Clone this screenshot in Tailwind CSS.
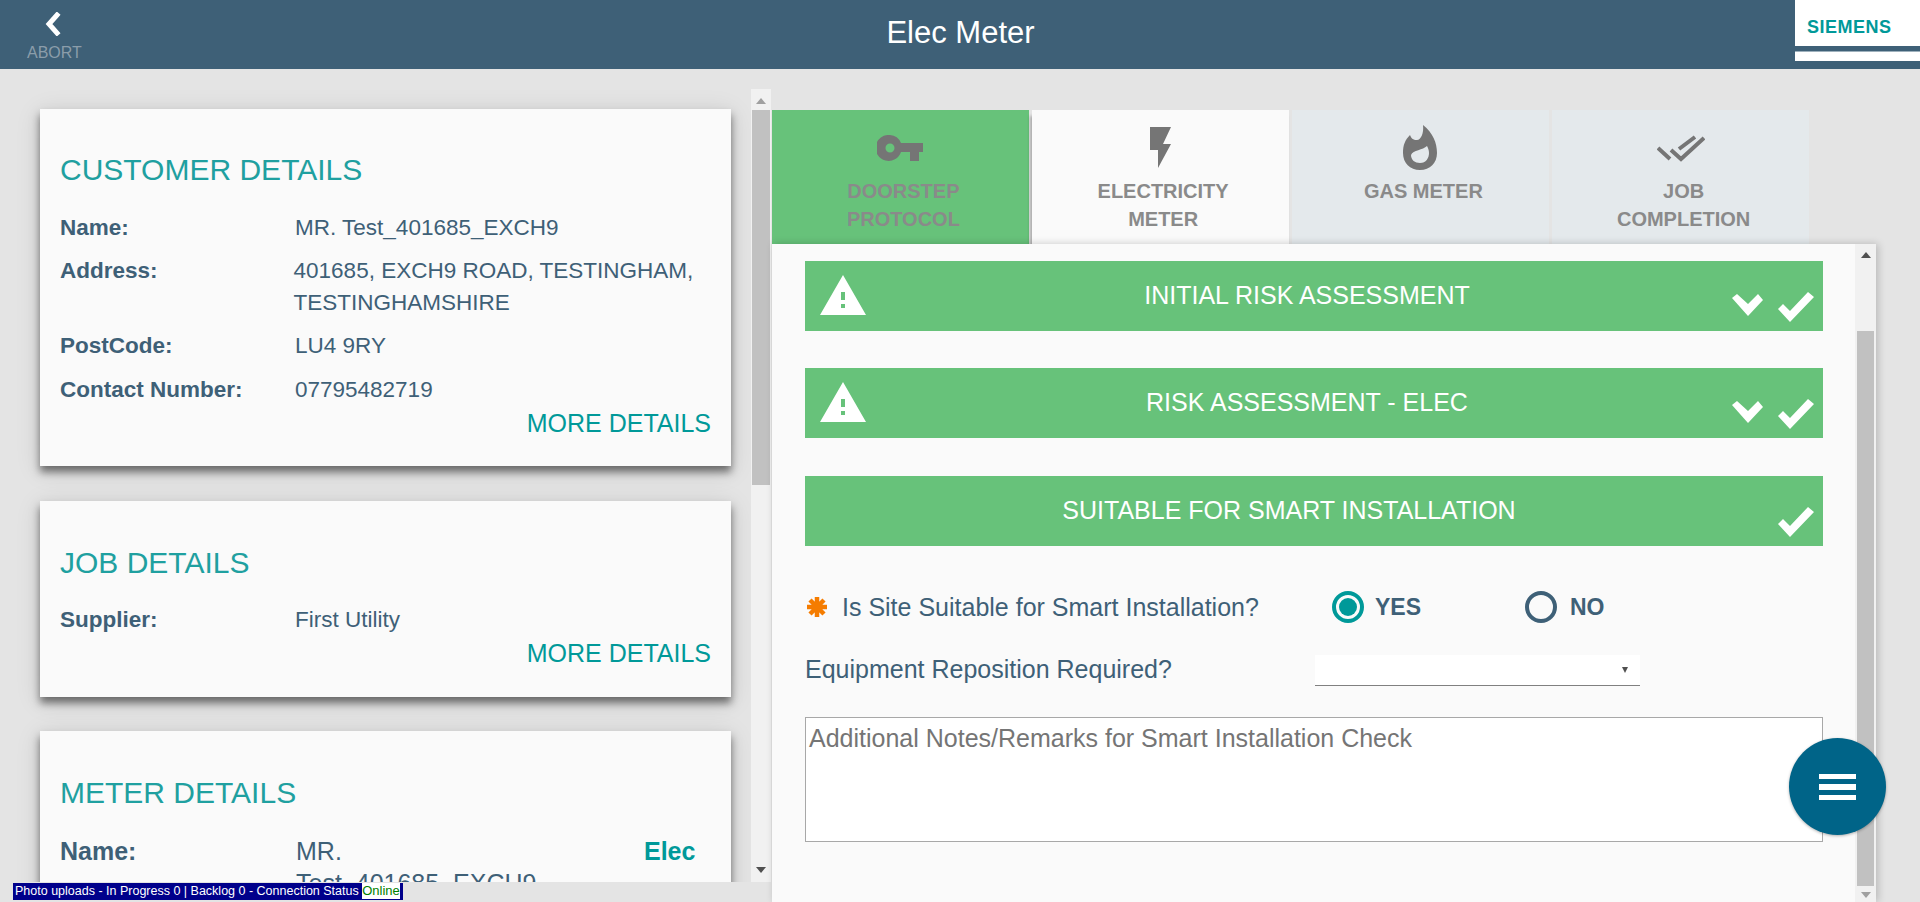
<!DOCTYPE html>
<html lang="en">

<head>
    <meta charset="UTF-8">
    <title>Elec Meter</title>
    <script src="https://cdn.jsdelivr.net/npm/@tailwindcss/browser@4"></script>
</head>

<body class="h-[902px] overflow-hidden bg-[#e4e4e4] font-['Liberation_Sans',Arial,sans-serif] text-[#3e6077]">
    <header class="h-[69px] bg-[#3e6077] flex items-start relative">
        <div class="w-[110px] pl-[27px] pt-[12px] flex flex-col">
            <svg width="18" height="24" viewBox="0 0 18 24" class="ml-[17px]">
                <path d="M13 3L5 12L13 21" fill="none" stroke="#fff" stroke-width="5" stroke-linecap="square" />
            </svg>
            <span class="text-[16px] leading-[18px] mt-[8px] text-[#8b9daa]">ABORT</span>
        </div>
        <h1 class="flex-1 text-center text-[31px] leading-[66px] text-white mr-[109px]">Elec Meter</h1>
        <div class="absolute right-0 top-0 w-[125px]">
            <div class="h-[46px] bg-white pl-[12px] pt-[18px]">
                <span class="block text-[#009999] font-bold text-[18px] leading-[18px] tracking-[0.5px]">SIEMENS</span>
            </div>
            <div class="h-[6px] border-b border-[#9db0bc]"></div>
            <div class="h-[9px] bg-white"></div>
        </div>
    </header>

    <main class="flex h-[833px] relative">
        <!-- left column -->
        <section class="w-[772px] h-[813px] flex shrink-0">
            <div class="w-[751px] h-full overflow-hidden pt-[40px] pl-[40px] pr-[20px]">
                <div class="bg-[#fafafa] h-[357px] pl-[20px] pr-[20px] pt-[43px] shadow-[0_6px_8px_rgba(0,0,0,0.5),0_4px_24px_rgba(0,0,0,0.12)]">
                    <h2 class="text-[30px] leading-[36px] text-[#1fa0a0]">CUSTOMER DETAILS</h2>
                    <dl class="mt-[24px] text-[22.5px] leading-[32px]">
                        <div class="flex h-[32px]"><dt class="w-[235px] font-bold">Name:</dt><dd>MR. Test_401685_EXCH9</dd></div>
                        <div class="flex mt-[11px]"><dt class="w-[235px] font-bold">Address:</dt><dd class="w-[420px]">401685, EXCH9 ROAD, TESTINGHAM, TESTINGHAMSHIRE</dd></div>
                        <div class="flex mt-[11px]"><dt class="w-[235px] font-bold">PostCode:</dt><dd>LU4 9RY</dd></div>
                        <div class="flex mt-[12px]"><dt class="w-[235px] font-bold">Contact Number:</dt><dd>07795482719</dd></div>
                    </dl>
                    <div class="text-right text-[25px] leading-[28px] mt-[3px] text-[#009999]">MORE DETAILS</div>
                </div>
                <div class="bg-[#fafafa] h-[196px] mt-[35px] pl-[20px] pr-[20px] pt-[44px] shadow-[0_6px_8px_rgba(0,0,0,0.5),0_4px_24px_rgba(0,0,0,0.12)]">
                    <h2 class="text-[30px] leading-[36px] text-[#1fa0a0]">JOB DETAILS</h2>
                    <div class="flex mt-[23px] text-[22.5px] leading-[32px]"><span class="w-[235px] font-bold">Supplier:</span><span>First Utility</span></div>
                    <div class="text-right text-[25px] leading-[28px] mt-[3px] text-[#009999]">MORE DETAILS</div>
                </div>
                <div class="bg-[#fafafa] h-[300px] mt-[34px] pl-[20px] pr-[20px] pt-[44px] shadow-[0_6px_8px_rgba(0,0,0,0.5),0_4px_24px_rgba(0,0,0,0.12)]">
                    <h2 class="text-[30px] leading-[36px] text-[#1fa0a0]">METER DETAILS</h2>
                    <div class="flex mt-[24px] text-[25px] leading-[32px]">
                        <span class="w-[236px] font-bold">Name:</span>
                        <span class="w-[348px]">MR.<br>Test_401685_EXCH9</span>
                        <span class="font-bold text-[#009999]">Elec</span>
                    </div>
                </div>
            </div>
            <div class="w-[20px] mt-[20px] h-[793px] bg-[#f1f1f1] flex flex-col items-center">
                <svg width="10" height="6" viewBox="0 0 10 6" class="mt-[9px] shrink-0"><path d="M5 0L10 6H0Z" fill="#a0a0a0" /></svg>
                <div class="w-[18px] h-[375px] mt-[6px] bg-[#c1c1c1]"></div>
                <svg width="10" height="6" viewBox="0 0 10 6" class="mt-auto mb-[9px] shrink-0"><path d="M0 0H10L5 6Z" fill="#505050" /></svg>
            </div>
        </section>

        <!-- right column -->
        <section class="w-[1104px] pt-[41px] shrink-0">
            <nav class="flex gap-[3px] w-[1037px] h-[134px] text-center font-bold text-[20px] leading-[28px] text-[#8a8a8a]">
                <div class="w-[257px] bg-[#67c27a] flex flex-col items-center">
                    <div class="h-[67px] pt-[25px]">
                        <svg width="46" height="26" viewBox="0 0 46 26">
                            <path fill-rule="evenodd" fill="#757575" d="M13 0A13 13 0 0 1 24 8H46V17H42V26H33V17H24A13 13 0 1 1 13 0ZM13 8.500A4.500 4.500 0 1 0 13 17.500A4.500 4.500 0 1 0 13 8.500Z" />
                        </svg>
                    </div>
                    <span class="pl-[6px]">DOORSTEP<br>PROTOCOL</span>
                </div>
                <div class="w-[257px] bg-[#fafafa] flex flex-col items-center shadow-[-2px_6px_3px_rgba(0,0,0,0.25)]">
                    <div class="h-[67px] pt-[17px]">
                        <svg width="21" height="41" viewBox="0 0 21 41">
                            <path fill="#757575" d="M0 0H21L13 17H21L8 41V23H0Z" />
                        </svg>
                    </div>
                    <span class="pl-[6px]">ELECTRICITY<br>METER</span>
                </div>
                <div class="w-[258px] bg-[#e4e9ec] flex flex-col items-center">
                    <div class="h-[67px] pt-[15px]">
                        <svg width="36" height="45" viewBox="0 0 36 45">
                            <path fill-rule="evenodd" fill="#757575" d="M21 0C31 8 35 18 35 28C35 38 28 45 18 45C8 45 1 38 1 28C1 20 3 15 8 10C9 13 11 15 15 15C19 15 22 8 21 0ZM25 21C21 25 11 25 9 30C9 35 13 38 18 38C24 38 27 33 27 28C27 25 26 23 25 21Z" />
                        </svg>
                    </div>
                    <span class="pl-[6px]">GAS METER</span>
                </div>
                <div class="w-[257px] bg-[#e4e9ec] flex flex-col items-center">
                    <div class="h-[67px] pt-[25px]">
                        <svg width="48" height="28" viewBox="0 0 48 28">
                            <path d="M1 13L13 24M14 15L24 24L47 3M22 14L38 2" fill="none" stroke="#757575" stroke-width="4" />
                        </svg>
                    </div>
                    <span class="pl-[6px]">JOB<br>COMPLETION</span>
                </div>
            </nav>

            <div class="relative h-[658px] bg-[#fafafa] flex shadow-[2px_0_8px_rgba(0,0,0,0.2)]">
                <div class="w-[1083px] pl-[33px] pr-[32px] pt-[17px]">
                    <div class="relative h-[70px] bg-[#67c27a] flex items-center justify-center text-white text-[25px] pr-[14px]">
                        <svg width="46" height="40" viewBox="0 0 46 40" class="absolute left-[15px] top-[14px]">
                            <path fill-rule="evenodd" fill="#fff" d="M23 0L46 40H0ZM21 17V25H25V17ZM21 29V33H25V29Z" />
                        </svg>
                        INITIAL RISK ASSESSMENT
                        <svg width="31" height="22" viewBox="0 0 31 22" class="absolute left-[927px] top-[33px]"><path fill="#fff" d="M0 4L5 0L16 10L26 0L31 6L16 22Z" /></svg>
                        <svg width="36" height="30" viewBox="0 0 36 30" class="absolute left-[973px] top-[31px]"><path fill="#fff" d="M0 17L5 12L12 19L30 0L36 5L12 30Z" /></svg>
                    </div>
                    <div class="relative h-[70px] mt-[37px] bg-[#67c27a] flex items-center justify-center text-white text-[25px] pr-[14px]">
                        <svg width="46" height="40" viewBox="0 0 46 40" class="absolute left-[15px] top-[14px]">
                            <path fill-rule="evenodd" fill="#fff" d="M23 0L46 40H0ZM21 17V25H25V17ZM21 29V33H25V29Z" />
                        </svg>
                        RISK ASSESSMENT - ELEC
                        <svg width="31" height="22" viewBox="0 0 31 22" class="absolute left-[927px] top-[33px]"><path fill="#fff" d="M0 4L5 0L16 10L26 0L31 6L16 22Z" /></svg>
                        <svg width="36" height="30" viewBox="0 0 36 30" class="absolute left-[973px] top-[31px]"><path fill="#fff" d="M0 17L5 12L12 19L30 0L36 5L12 30Z" /></svg>
                    </div>
                    <div class="relative h-[70px] mt-[38px] bg-[#67c27a] flex items-center justify-center text-white text-[25px] pr-[50px]">
                        SUITABLE FOR SMART INSTALLATION
                        <svg width="36" height="30" viewBox="0 0 36 30" class="absolute left-[973px] top-[31px]"><path fill="#fff" d="M0 17L5 12L12 19L30 0L36 5L12 30Z" /></svg>
                    </div>

                    <div class="flex items-center h-[32px] mt-[45px] text-[25px]">
                        <svg width="22" height="20" viewBox="0 0 22 20" class="ml-[1px] shrink-0">
                            <path d="M11 0V20M1 10H21M4 3L18 17M18 3L4 17" fill="none" stroke="#f57c00" stroke-width="4.500" />
                        </svg>
                        <span class="w-[490px] ml-[14px] pt-[2px]">Is Site Suitable for Smart Installation?</span>
                        <span class="w-[32px] h-[32px] rounded-full border-[4px] border-[#009999] p-[3px]"><span class="block w-full h-full rounded-full bg-[#009999]"></span></span>
                        <span class="w-[150px] ml-[11px] font-bold text-[23px] text-[#3e6077]">YES</span>
                        <span class="w-[32px] h-[32px] rounded-full border-[4px] border-[#3e6077]"></span>
                        <span class="ml-[13px] font-bold text-[23px]">NO</span>
                    </div>

                    <div class="flex items-center h-[32px] mt-[31px] text-[25px]">
                        <span class="w-[510px]">Equipment Reposition Required?</span>
                        <div class="w-[325px] h-[31px] bg-white border-b border-[#808080] flex items-center justify-end pr-[12px]">
                            <svg width="6" height="6" viewBox="0 0 6 6"><path d="M0 0H6L3 6Z" fill="#505050" /></svg>
                        </div>
                    </div>

                    <div class="h-[125px] mt-[31px] bg-white border border-[#a8a8a8] px-[3px] pt-[5px] text-[25px] leading-[30px] text-[#757575]">Additional Notes/Remarks for Smart Installation Check</div>
                </div>

                <div class="w-[21px] h-full bg-[#f1f1f1] flex flex-col items-center">
                    <svg width="10" height="6" viewBox="0 0 10 6" class="mt-[8px] shrink-0"><path d="M5 0L10 6H0Z" fill="#505050" /></svg>
                    <div class="w-[17px] h-[555px] mt-[73px] bg-[#c1c1c1]"></div>
                    <svg width="10" height="6" viewBox="0 0 10 6" class="mt-[6px] shrink-0"><path d="M0 0H10L5 6Z" fill="#a0a0a0" /></svg>
                </div>

                <button class="absolute left-[1017px] top-[494px] w-[97px] h-[97px] rounded-full bg-[#006488] flex flex-col items-center justify-center gap-[5px] shadow-[0_1px_3px_rgba(0,0,0,0.3)]">
                    <span class="block w-[37px] h-[5px] bg-white"></span>
                    <span class="block w-[37px] h-[6px] bg-white"></span>
                    <span class="block w-[37px] h-[5px] bg-white"></span>
                </button>
            </div>
        </section>

        <div class="absolute left-[13px] top-[814px] h-[17px] bg-[#00008b] pl-[2px] pr-[3px] text-[12.500px] leading-[16px] text-white whitespace-nowrap">
            Photo uploads - In Progress 0 | Backlog 0 - Connection Status <span class="inline-block bg-white text-[#008000] text-[13px]">Online</span>
        </div>
    </main>
</body>

</html>
